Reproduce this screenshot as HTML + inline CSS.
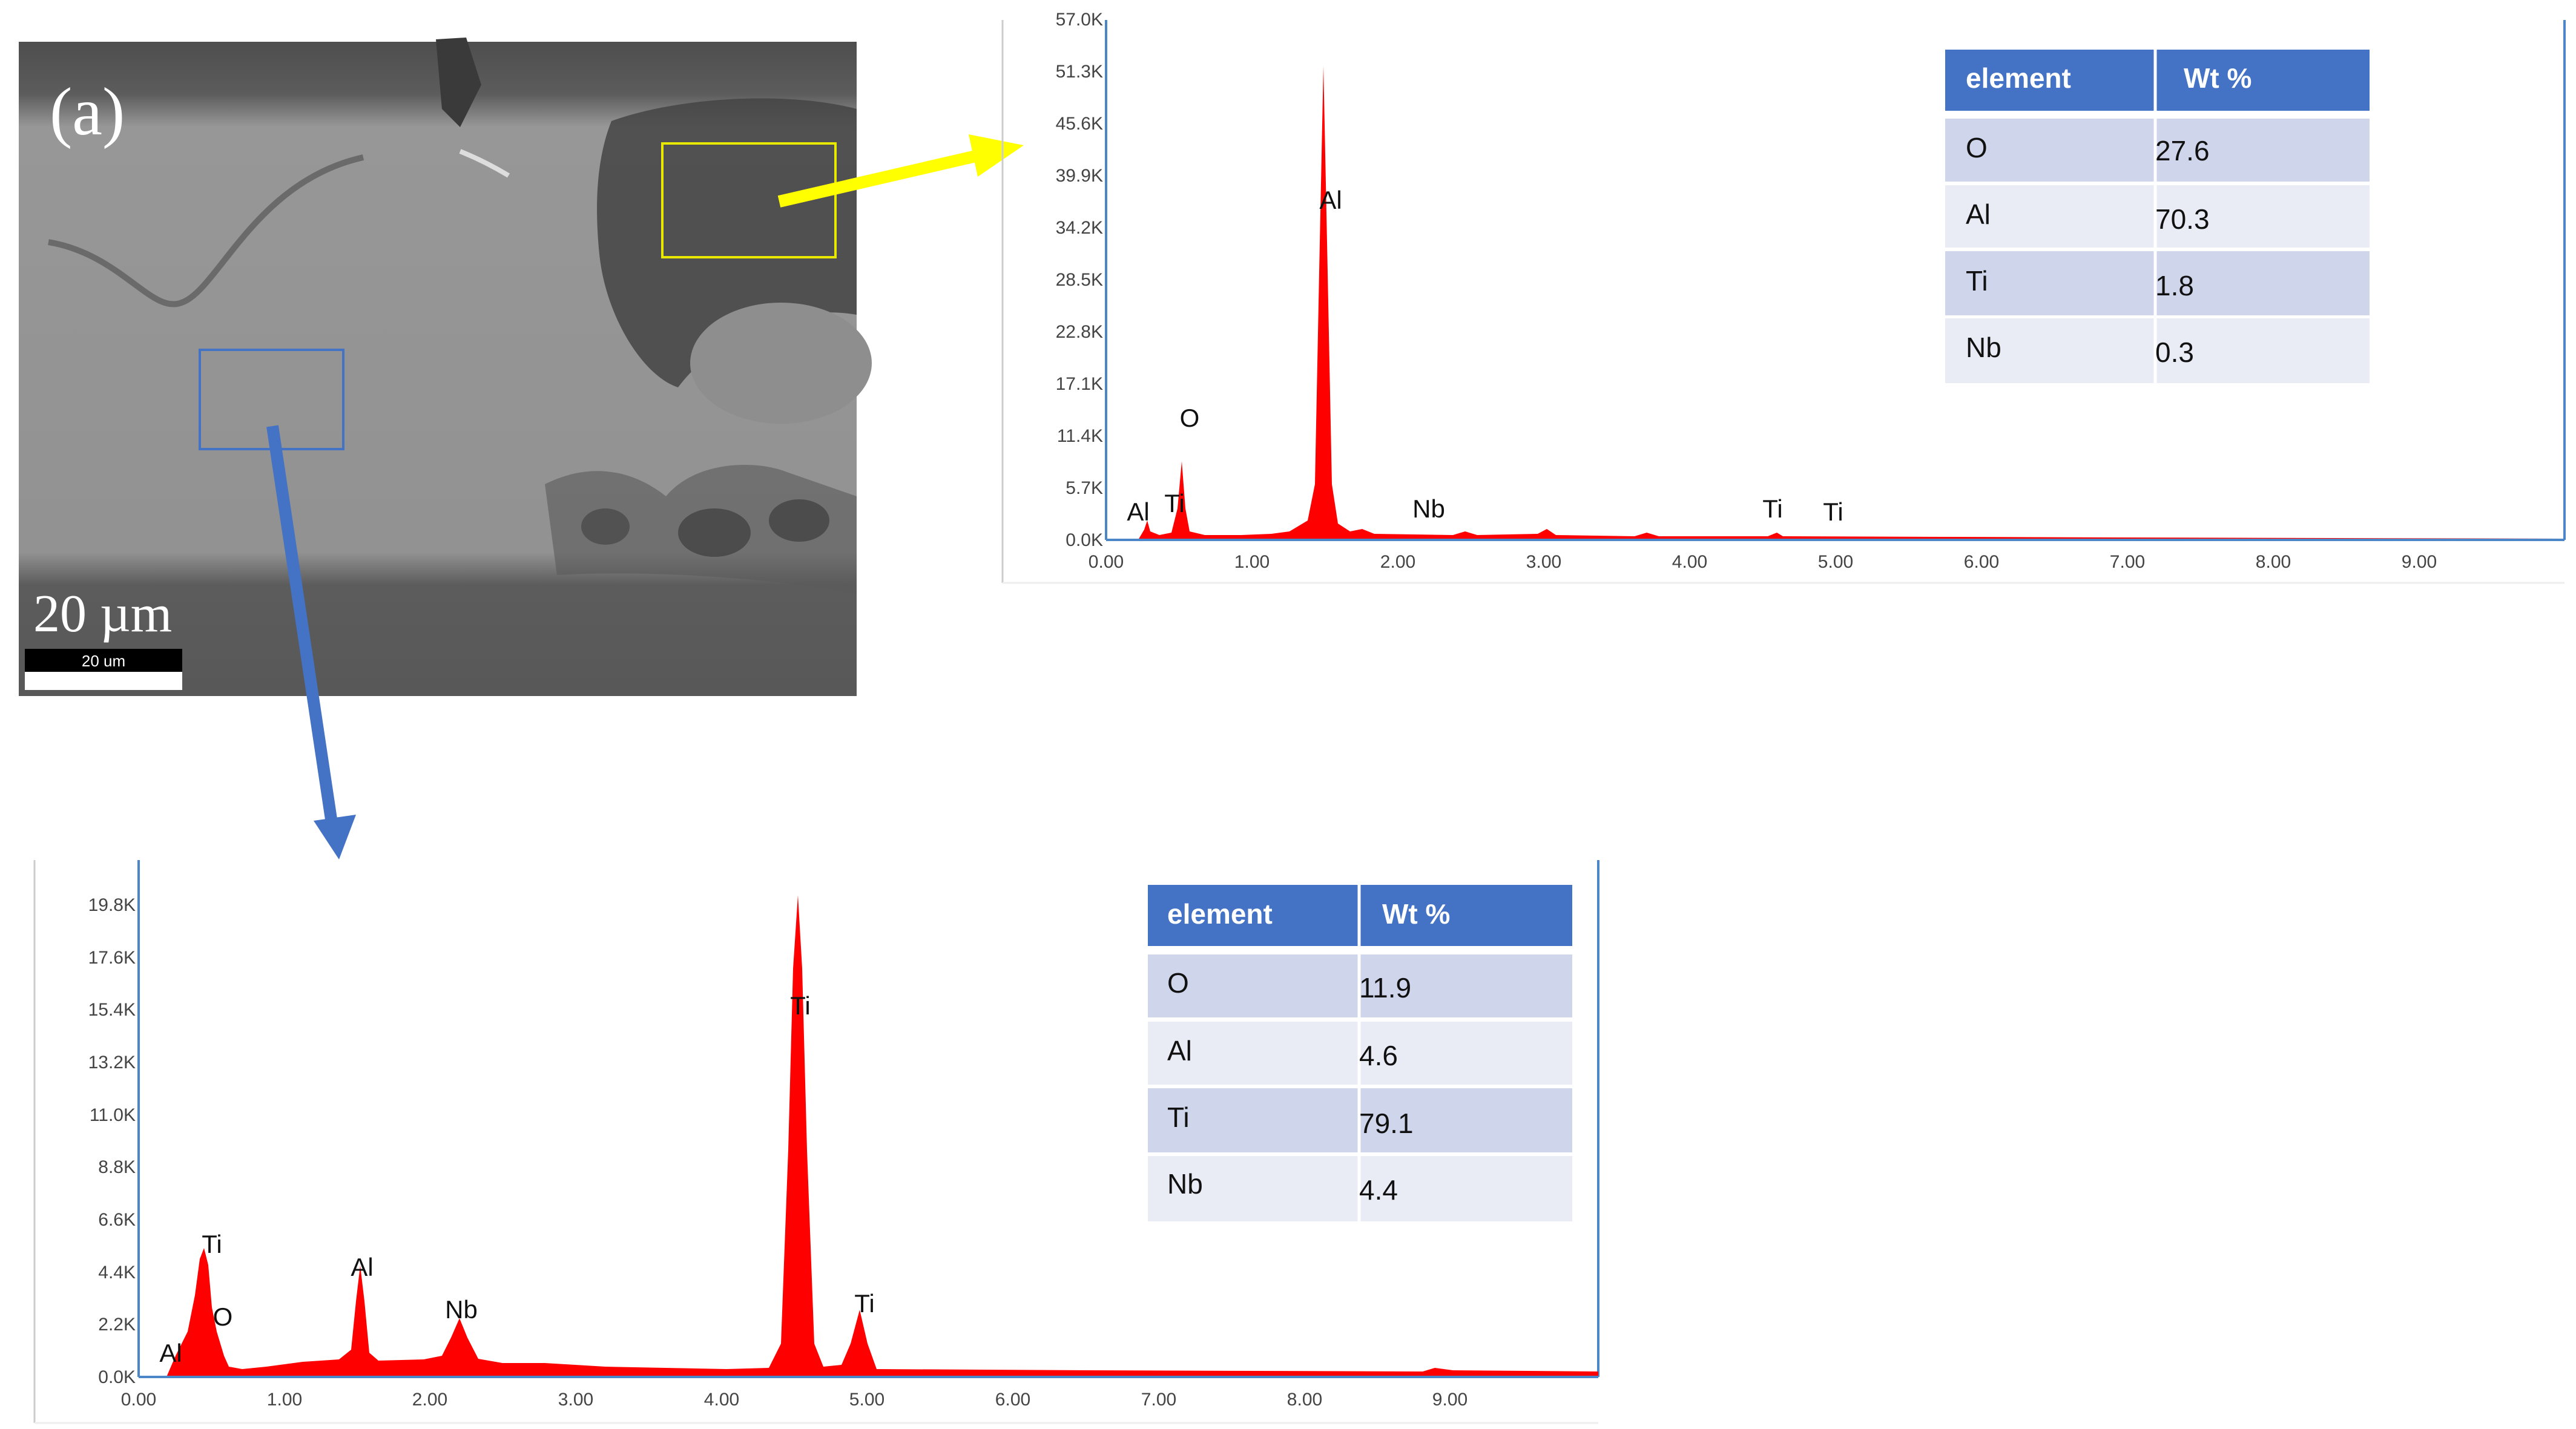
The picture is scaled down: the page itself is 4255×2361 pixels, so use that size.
<!DOCTYPE html>
<html><head><meta charset="utf-8"><style>
html,body{margin:0;padding:0;background:#fff;}
svg{display:block;}
.t{font-family:"Liberation Sans",sans-serif;}
</style></head><body>
<svg width="4255" height="2361" viewBox="0 0 4255 2361" xmlns="http://www.w3.org/2000/svg">
<defs>
<linearGradient id="sem" x1="0" y1="0" x2="0" y2="1">
<stop offset="0" stop-color="#4e4e4e"/><stop offset="0.08" stop-color="#5c5c5c"/>
<stop offset="0.13" stop-color="#979797"/><stop offset="0.78" stop-color="#929292"/>
<stop offset="0.83" stop-color="#5c5c5c"/><stop offset="1" stop-color="#585858"/>
</linearGradient>
</defs>
<!-- SEM image -->
<rect x="31" y="69" width="1384" height="1081" fill="url(#sem)"/>
<path d="M1010 200 C1120 160 1300 150 1415 180 L1415 520 C1300 500 1180 560 1120 640 C1060 620 1000 520 990 420 C980 320 990 250 1010 200Z" fill="#444" opacity="0.85"/>
<ellipse cx="1290" cy="600" rx="150" ry="100" fill="#8e8e8e"/>
<path d="M900 800 C980 760 1050 780 1100 820 C1150 760 1250 760 1300 780 L1415 820 L1415 980 C1300 960 1100 940 920 950Z" fill="#5a5a5a" opacity="0.6"/>
<ellipse cx="1180" cy="880" rx="60" ry="40" fill="#333" opacity="0.6"/>
<ellipse cx="1320" cy="860" rx="50" ry="35" fill="#333" opacity="0.6"/>
<ellipse cx="1000" cy="870" rx="40" ry="30" fill="#333" opacity="0.5"/>
<path d="M80 400 C200 420 250 520 300 500 C360 480 420 300 600 260" stroke="#6a6a6a" stroke-width="10" fill="none"/>
<path d="M720 65 L770 62 L795 140 L760 210 L730 180Z" fill="#3a3a3a"/>
<path d="M760 250 C790 262 815 275 840 290" stroke="#ddd" stroke-width="8" fill="none"/>
<rect x="1094" y="237" width="286" height="188" fill="none" stroke="#e8e800" stroke-width="4"/>
<rect x="330" y="578" width="237" height="164" fill="none" stroke="#4472c4" stroke-width="4"/>
<text x="82" y="222" font-family="Liberation Serif,serif" font-size="112" fill="#fff">(a)</text>
<text x="55" y="1043" font-family="Liberation Serif,serif" font-size="88" fill="#fff">20 µm</text>
<rect x="41" y="1072" width="260" height="38" fill="#000"/>
<rect x="41" y="1110" width="260" height="30" fill="#fff"/>
<text x="171" y="1101" class="t" font-size="26" fill="#fff" text-anchor="middle">20 um</text>
<!-- arrows -->
<line x1="1287" y1="333" x2="1620" y2="256" stroke="#ffff00" stroke-width="20"/>
<polygon points="1600,222 1691,240 1615,292" fill="#ffff00"/>
<line x1="450" y1="704" x2="548" y2="1360" stroke="#4472c4" stroke-width="20"/>
<polygon points="518,1356 588,1346 560,1420" fill="#4472c4"/>

<!-- TOP CHART -->
<line x1="1656" y1="33" x2="1656" y2="963" stroke="#ccc" stroke-width="3"/>
<line x1="1656" y1="963" x2="4236" y2="963" stroke="#eee" stroke-width="3"/>
<line x1="1827" y1="33" x2="1827" y2="892" stroke="#4a86c8" stroke-width="4"/>
<line x1="4236" y1="33" x2="4236" y2="892" stroke="#4a86c8" stroke-width="4"/>
<g class="t" font-size="30" fill="#444" text-anchor="end" transform="translate(1822,0)">
<text x="0" y="42">57.0K</text><text x="0" y="128">51.3K</text><text x="0" y="214">45.6K</text>
<text x="0" y="300">39.9K</text><text x="0" y="386">34.2K</text><text x="0" y="472">28.5K</text>
<text x="0" y="558">22.8K</text><text x="0" y="644">17.1K</text><text x="0" y="730">11.4K</text>
<text x="0" y="816">5.7K</text><text x="0" y="902">0.0K</text>
</g>
<g class="t" font-size="30" fill="#444" text-anchor="middle">
<text x="1827" y="938">0.00</text><text x="2068" y="938">1.00</text><text x="2309" y="938">2.00</text>
<text x="2550" y="938">3.00</text><text x="2791" y="938">4.00</text><text x="3032" y="938">5.00</text>
<text x="3273" y="938">6.00</text><text x="3514" y="938">7.00</text><text x="3755" y="938">8.00</text>
<text x="3996" y="938">9.00</text>
</g>
<path d="M1880 892 L1890 875 L1895 860 L1900 878 L1915 884 L1935 880 L1945 840 L1952 762 L1958 840 L1965 878 L1990 884 L2050 884 L2100 882 L2130 878 L2160 860 L2172 800 L2180 400 L2186 109 L2192 400 L2200 800 L2210 865 L2230 878 L2250 874 L2270 882 L2400 884 L2420 878 L2440 884 L2540 882 L2555 874 L2570 884 L2700 886 L2720 880 L2740 886 L2920 886 L2935 880 L2945 886 L3500 888 L4236 890 L4236 892 Z" fill="#ff0000"/>
<line x1="1827" y1="892" x2="4236" y2="892" stroke="#4a86c8" stroke-width="4"/>
<g class="t" font-size="42" fill="#111" text-anchor="middle">
<text x="1880" y="860">Al</text><text x="1940" y="846">Ti</text><text x="1965" y="705">O</text>
<text x="2198" y="345">Al</text><text x="2360" y="855">Nb</text><text x="2928" y="855">Ti</text><text x="3028" y="860">Ti</text>
</g>
<!-- top table -->
<rect x="3213" y="82" width="701" height="101" fill="#4472c4"/>
<rect x="3213" y="196" width="701" height="104" fill="#cfd5ea"/>
<rect x="3213" y="306" width="701" height="103" fill="#e9ebf5"/>
<rect x="3213" y="415" width="701" height="106" fill="#cfd5ea"/>
<rect x="3213" y="526" width="701" height="107" fill="#e9ebf5"/>
<line x1="3560" y1="82" x2="3560" y2="633" stroke="#fff" stroke-width="5"/>
<g class="t" font-size="46" fill="#fff" font-weight="bold"><text x="3247" y="145">element</text><text x="3607" y="145">Wt %</text></g>
<g class="t" font-size="46" fill="#111">
<text x="3247" y="260">O</text><text x="3560" y="265">27.6</text>
<text x="3247" y="370">Al</text><text x="3560" y="378">70.3</text>
<text x="3247" y="480">Ti</text><text x="3560" y="488">1.8</text>
<text x="3247" y="590">Nb</text><text x="3560" y="598">0.3</text>
</g>

<!-- BOTTOM CHART -->
<line x1="57" y1="1421" x2="57" y2="2351" stroke="#ccc" stroke-width="3"/>
<line x1="57" y1="2351" x2="2640" y2="2351" stroke="#eee" stroke-width="3"/>
<line x1="229" y1="1421" x2="229" y2="2275" stroke="#4a86c8" stroke-width="4"/>
<line x1="2640" y1="1421" x2="2640" y2="2275" stroke="#4a86c8" stroke-width="4"/>
<g class="t" font-size="30" fill="#444" text-anchor="end" transform="translate(224,0)">
<text x="0" y="1505">19.8K</text><text x="0" y="1592">17.6K</text><text x="0" y="1678">15.4K</text>
<text x="0" y="1765">13.2K</text><text x="0" y="1852">11.0K</text><text x="0" y="1938">8.8K</text>
<text x="0" y="2025">6.6K</text><text x="0" y="2112">4.4K</text><text x="0" y="2198">2.2K</text>
<text x="0" y="2285">0.0K</text>
</g>
<g class="t" font-size="30" fill="#444" text-anchor="middle">
<text x="229" y="2322">0.00</text><text x="470" y="2322">1.00</text><text x="710" y="2322">2.00</text>
<text x="951" y="2322">3.00</text><text x="1192" y="2322">4.00</text><text x="1432" y="2322">5.00</text>
<text x="1673" y="2322">6.00</text><text x="1914" y="2322">7.00</text><text x="2155" y="2322">8.00</text>
<text x="2395" y="2322">9.00</text>
</g>
<path d="M275 2275 L290 2240 L310 2200 L322 2140 L330 2080 L337 2062 L344 2090 L350 2160 L358 2200 L370 2240 L378 2258 L400 2262 L440 2258 L500 2250 L560 2246 L580 2230 L588 2150 L595 2091 L602 2150 L610 2235 L625 2248 L700 2246 L730 2240 L745 2210 L759 2178 L772 2210 L790 2245 L830 2252 L900 2252 L1000 2258 L1200 2262 L1270 2260 L1290 2220 L1302 1900 L1310 1600 L1318 1479 L1325 1600 L1333 1900 L1345 2220 L1360 2258 L1390 2255 L1405 2220 L1420 2164 L1433 2220 L1448 2262 L1800 2264 L2350 2266 L2370 2260 L2400 2264 L2640 2266 L2640 2275 Z" fill="#ff0000"/>
<line x1="229" y1="2275" x2="2640" y2="2275" stroke="#4a86c8" stroke-width="4"/>
<g class="t" font-size="42" fill="#111" text-anchor="middle">
<text x="282" y="2250">Al</text><text x="350" y="2070">Ti</text><text x="368" y="2190">O</text>
<text x="598" y="2108">Al</text><text x="762" y="2178">Nb</text><text x="1322" y="1676">Ti</text><text x="1428" y="2168">Ti</text>
</g>
<!-- bottom table -->
<rect x="1896" y="1462" width="701" height="101" fill="#4472c4"/>
<rect x="1896" y="1577" width="701" height="104" fill="#cfd5ea"/>
<rect x="1896" y="1688" width="701" height="104" fill="#e9ebf5"/>
<rect x="1896" y="1798" width="701" height="106" fill="#cfd5ea"/>
<rect x="1896" y="1910" width="701" height="108" fill="#e9ebf5"/>
<line x1="2245" y1="1462" x2="2245" y2="2018" stroke="#fff" stroke-width="5"/>
<g class="t" font-size="46" fill="#fff" font-weight="bold"><text x="1928" y="1526">element</text><text x="2283" y="1526">Wt %</text></g>
<g class="t" font-size="46" fill="#111">
<text x="1928" y="1640">O</text><text x="2245" y="1648">11.9</text>
<text x="1928" y="1752">Al</text><text x="2245" y="1760">4.6</text>
<text x="1928" y="1862">Ti</text><text x="2245" y="1872">79.1</text>
<text x="1928" y="1972">Nb</text><text x="2245" y="1982">4.4</text>
</g>
</svg>
</body></html>
